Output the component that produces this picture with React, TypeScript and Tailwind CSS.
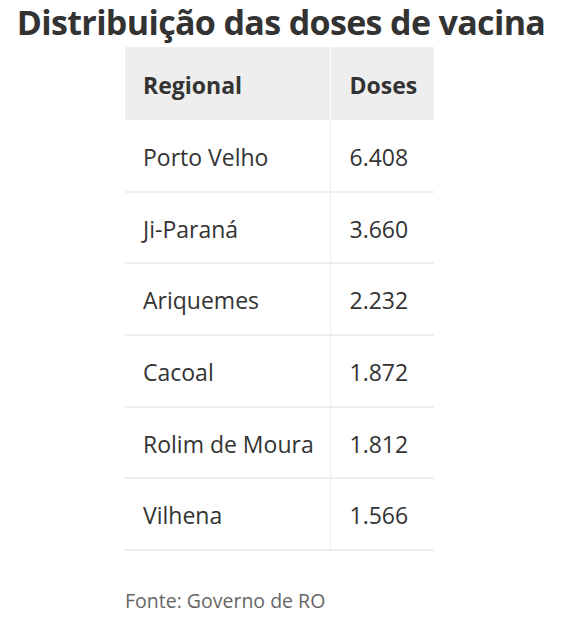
const rows = [
  ["Porto Velho", "6.408"],
  ["Ji-Paraná", "3.660"],
  ["Ariquemes", "2.232"],
  ["Cacoal", "1.872"],
  ["Rolim de Moura", "1.812"],
  ["Vilhena", "1.566"],
];

export default function App() {
  return (
    <div className="bg-white min-h-screen text-[#333] font-['Open_Sans',sans-serif]">
      <h1 className="text-center text-[34px] font-bold leading-[1.3] tracking-[-0.65px] whitespace-nowrap">
        Distribuição das doses de vacina
      </h1>

      <div className="w-[309px] ml-[125px] mt-[3px]">
        <table className="w-full border-collapse text-[23px]">
          <thead>
            <tr className="bg-[#eee] h-[73px]">
              <th className="w-[205px] text-left font-bold pl-[18px] pt-[3px] border-r border-white">Regional</th>
              <th className="text-left font-bold pl-[19px] pt-[3px]">Doses</th>
            </tr>
          </thead>
          <tbody>
            {rows.map(([name, doses]) => (
              <tr key={name} className="h-[71.6px] border-b-2 border-[#eee]">
                <td className="pl-[18px] pt-[3px] border-r border-[#eee]">{name}</td>
                <td className="pl-[19px] pt-[3px]">{doses}</td>
              </tr>
            ))}
          </tbody>
        </table>

        <p className="mt-[35px] text-[19.5px] text-[#666]">Fonte: Governo de RO</p>
      </div>
    </div>
  );
}
